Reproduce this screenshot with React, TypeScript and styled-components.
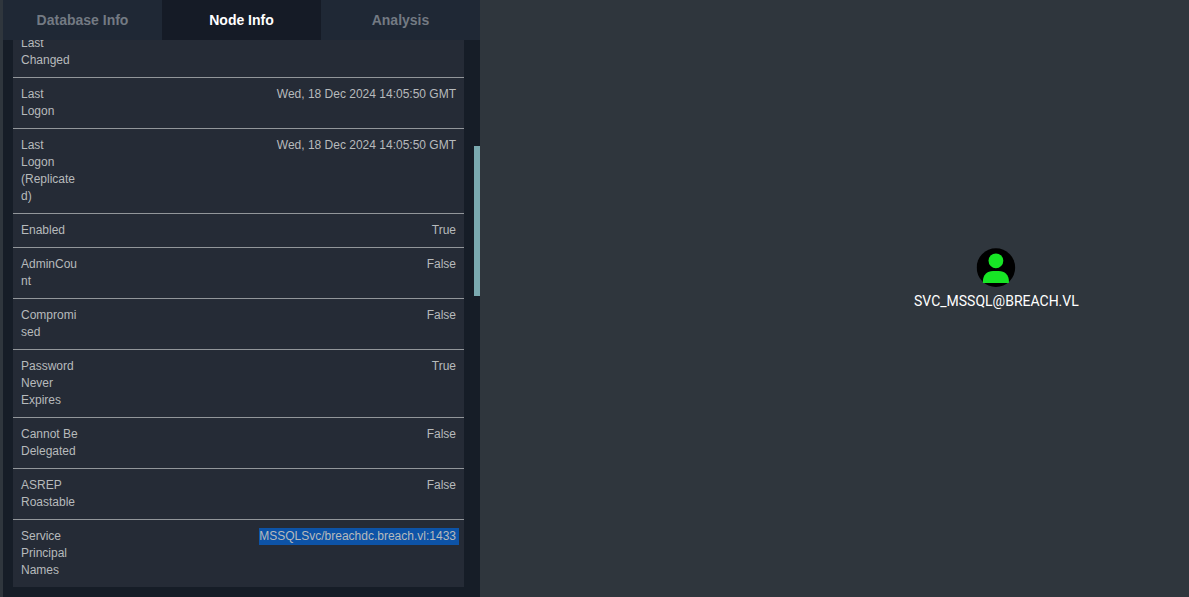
import React from 'react';
import styled, { createGlobalStyle } from 'styled-components';

const GlobalStyle = createGlobalStyle`
  * { box-sizing: border-box; }
  body { margin: 0; background: #2f363d; overflow: hidden; }
`;

const Screen = styled.div`
  display: flex;
  width: 100vw;
  height: 100vh;
  padding-left: 3px;
  overflow: hidden;
  background: #2f363d;
  font-family: 'Liberation Sans', Arial, sans-serif;
`;

const Panel = styled.aside`
  display: flex;
  flex-direction: column;
  flex: 0 0 477px;
  background: #161d27;
`;

const Tabs = styled.nav`
  display: flex;
  flex: 0 0 40px;
`;

const Tab = styled.button<{ $active?: boolean }>`
  flex: 1;
  border: 0;
  padding: 0;
  font: bold 14px/40px 'Liberation Sans', Arial, sans-serif;
  color: ${p => (p.$active ? '#ffffff' : '#737a83')};
  background: ${p => (p.$active ? '#151b26' : '#1f2835')};
`;

const Body = styled.div`
  display: flex;
  justify-content: space-between;
  flex: 1;
  min-height: 0;
  padding-left: 10px;
  overflow: hidden;
`;

const List = styled.dl`
  width: 451px;
  height: max-content;
  margin: -14px 0 0;
  background: #252b36;
`;

const Row = styled.div`
  display: flex;
  justify-content: space-between;
  padding: 8px;
  border-top: 1px solid #92969a;
  font-size: 12px;
  line-height: 17px;
  color: #b7babc;
`;

const Label = styled.dt`
  width: 58px;
  overflow-wrap: anywhere;
`;

const Value = styled.dd`
  margin: 0;
`;

const Selected = styled.span`
  display: block;
  margin-right: -3px;
  padding-right: 3px;
  background: #0d53a7;
`;

const ScrollThumb = styled.div`
  width: 6px;
  height: 150px;
  margin-top: 106px;
  background: #7aa9b0;
`;

const Graph = styled.main`
  position: relative;
  flex: 1;
`;

const Node = styled.div`
  position: absolute;
  left: 516.4px;
  top: 248px;
  display: flex;
  flex-direction: column;
  align-items: center;
  transform: translateX(-50%);
  font: 14px/16px Roboto, sans-serif;
  color: #ffffff;
  white-space: nowrap;
`;

const UserIcon = styled.svg`
  display: block;
  width: 39px;
  height: 39px;
  margin-bottom: 6px;
`;

const rows: { label: string; value: string; selected?: boolean }[] = [
  { label: 'Last Changed', value: '' },
  { label: 'Last Logon', value: 'Wed, 18 Dec 2024 14:05:50 GMT' },
  { label: 'Last Logon (Replicated)', value: 'Wed, 18 Dec 2024 14:05:50 GMT' },
  { label: 'Enabled', value: 'True' },
  { label: 'AdminCount', value: 'False' },
  { label: 'Compromised', value: 'False' },
  { label: 'Password Never Expires', value: 'True' },
  { label: 'Cannot Be Delegated', value: 'False' },
  { label: 'ASREP Roastable', value: 'False' },
  { label: 'Service Principal Names', value: 'MSSQLSvc/breachdc.breach.vl:1433', selected: true },
];

export default function App() {
  return (
    <>
      <GlobalStyle />
      <Screen>
        <Panel>
          <Tabs>
            <Tab>Database Info</Tab>
            <Tab $active>Node Info</Tab>
            <Tab>Analysis</Tab>
          </Tabs>
          <Body>
            <List>
              {rows.map(row => (
                <Row key={row.label}>
                  <Label>{row.label}</Label>
                  <Value>{row.selected ? <Selected>{row.value}</Selected> : row.value}</Value>
                </Row>
              ))}
            </List>
            <ScrollThumb />
          </Body>
        </Panel>
        <Graph>
          <Node>
            <UserIcon viewBox="0 0 39 39">
              <circle cx="19.3" cy="19.6" r="19.3" fill="#000" />
              <circle cx="19.3" cy="12.8" r="7.4" fill="#17e625" />
              <path d="M6.3 34.9V33C6.3 27 10.5 22.9 16.5 22.9H22.1C28.1 22.9 32.3 27 32.3 33V34.9Z" fill="#17e625" />
            </UserIcon>
            SVC_MSSQL@BREACH.VL
          </Node>
        </Graph>
      </Screen>
    </>
  );
}
